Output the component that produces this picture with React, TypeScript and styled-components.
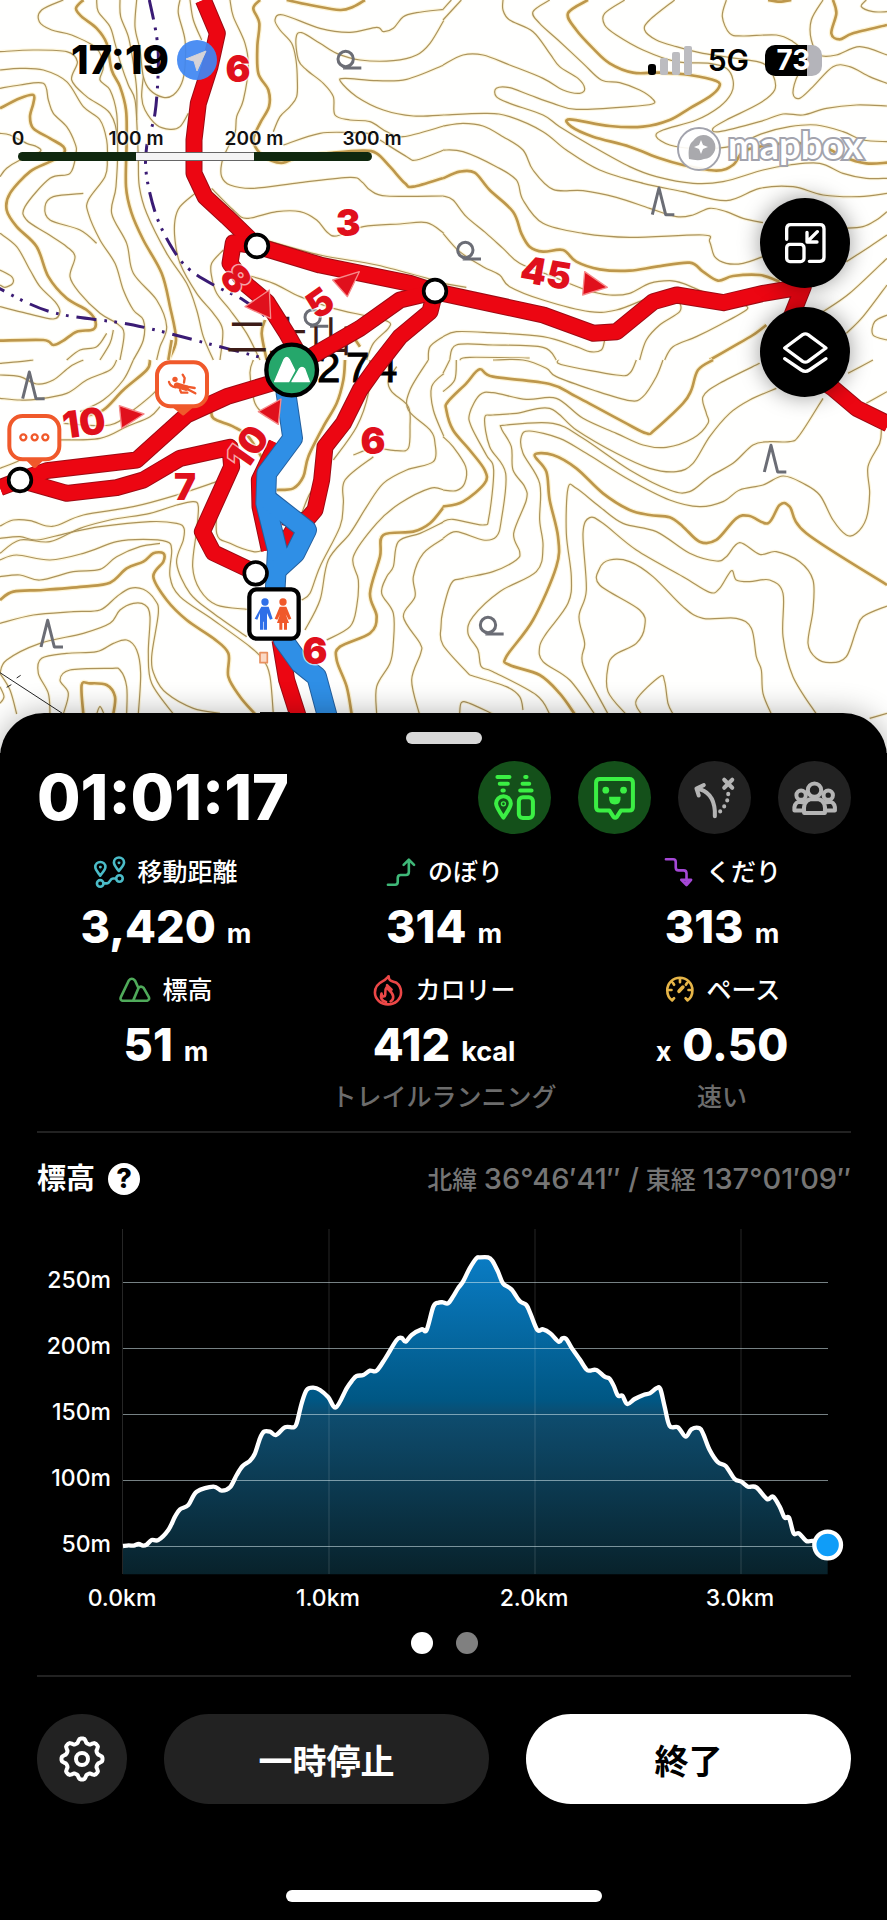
import React from "react";
import styled, { createGlobalStyle } from "styled-components";

const GlobalStyle = createGlobalStyle`
  *, *::before, *::after { box-sizing: border-box; }
  body { margin: 0; background: #000; }
  body, button { font-family: Inter, "Noto Sans CJK JP", sans-serif; }
  button { border: 0; padding: 0; cursor: pointer; }
`;

/* ---------- geometry helpers ---------- */

const parse = (s: string) => s.trim().split(/\s+/).map((p) => p.split(",").map(Number));

/** Smooth curve passing through every point. */
const curve = (s: string, tension = 6) => {
  const p = parse(s);
  let d = `M${p[0][0]} ${p[0][1]}`;
  for (let i = 0; i < p.length - 1; i++) {
    const a = p[i - 1] || p[i];
    const b = p[i];
    const c = p[i + 1];
    const e = p[i + 2] || c;
    d += `C${(b[0] + (c[0] - a[0]) / tension).toFixed(1)} ${(b[1] + (c[1] - a[1]) / tension).toFixed(1)} ${(c[0] - (e[0] - b[0]) / tension).toFixed(1)} ${(c[1] - (e[1] - b[1]) / tension).toFixed(1)} ${c[0]} ${c[1]}`;
  }
  return d;
};

/* ---------- map data: four tiles, three units to the pixel ---------- */

type Tile = { x: number; y: number; minor: string[]; major: string[] };

const tiles: Tile[] = [
  {
    x: 0,
    y: 0,
    minor: [
      "190,0 125,30 118,65 155,90 215,105 290,145 310,200 300,240 330,270 350,340 352,430",
      "290,0 295,35 330,80 345,130 362,190 385,255 405,300 412,400 415,480 418,560 440,640 500,760 560,850 590,930 610,1010 640,1080",
      "360,0 362,50 385,110 400,190 410,270 410,360",
      "410,0 405,80 420,150 430,230 450,270 490,292 520,285 545,250 555,200 555,120 535,40 540,0",
      "570,0 580,60 605,120",
      "430,230 425,290 435,330 470,375 510,388 540,380 565,340",
      "0,210 60,205 130,210 200,245 250,320 300,360 320,420 322,480 315,530 265,600 265,640 300,720 345,790 370,870 400,930 430,960 430,1020 400,1080",
      "0,265 60,255 130,250 145,300 160,340 200,380 225,430 228,460 210,520 150,535 75,620 80,660 140,700 200,740 225,770 210,830 240,880 300,940 350,970 372,1000 360,1080",
      "0,155 100,150 200,155 232,185 215,240 260,290 330,340 352,420 348,560 335,640 380,730 400,820 470,900 500,980 480,1040 470,1080",
      "250,580 160,590 135,620 150,660 240,690 290,730",
      "0,400 30,405 80,430 110,440 120,455 60,480 20,505 0,530",
      "585,580 540,620 525,660 525,720 540,790 590,880 640,940 668,990 660,1080",
      "0,810 35,830 38,850 15,862 0,855",
      "0,920 80,940 160,957 180,935 165,905 120,860 90,810 50,740 0,700",
      "300,1080 330,1030 340,990",
      "690,0 700,50 735,130 745,200 730,300 710,350 705,400 680,450 665,490 665,530 690,555 760,565 900,548 1050,532 1085,545 1110,570 1160,588 1332,588",
      "1332,28 1250,38 1210,50 1180,85 1150,95 1130,82 1050,97 960,85 850,45 825,60 840,90 875,130 888,180 892,240 890,290 870,320 840,350 820,395",
      "1332,60 1290,130 1250,165 1180,182 1080,180 1010,160 960,130 905,98 888,115 895,180 920,210 970,250 1000,290 1005,345 1050,360 1110,365 1160,395 1210,410 1332,378",
      "1332,345 1240,348 1150,330 1070,290 1022,245 1035,235 1130,242 1220,238 1332,195",
      "850,435 960,400 1060,398 1120,402",
      "1140,420 1220,470 1250,480 1332,450",
      "635,565 700,630 740,655 830,635 900,635 950,660 980,695 1010,708 1090,680 1200,672 1280,668 1332,700",
      "780,715 960,765 1130,795 1300,840",
      "670,750 635,790 635,830 650,880 690,930 740,1000 780,1080",
      "740,825 820,850 900,890 1000,925 1100,948 1165,965 1165,985 1120,1030 1100,1080",
      "1329,1010 1290,1040 1285,1080",
      "200,1080 240,1050 290,1040 320,1000",
    ],
    major: [
      "0,325 60,295 100,285 100,310 90,350 100,385 150,415 190,440 190,462 150,485 90,515 30,580 20,630 50,680 110,740 145,830 200,895 260,930 285,960 280,988 230,995 190,1022 160,1035 130,1020 0,1022",
      "250,0 228,25 245,50 290,85 320,130 335,210 360,260 378,330 380,420 378,560 395,640 430,720 485,820 510,920 528,1020 505,1080",
      "780,0 760,25 778,70 772,140 775,220 805,270 807,320 780,370 760,420 780,460 815,482 850,488 900,470 1000,458 1090,452 1130,460 1170,500 1215,550 1240,560 1332,533",
      "860,0 930,15 1020,30 1060,20 1095,0",
      "795,960 785,1000 800,1080",
      "1060,1010 1080,1040",
    ],
  },
  {
    x: 1329,
    y: 0,
    minor: [
      "0,60 55,0",
      "0,28 25,0",
      "0,195 60,165 120,165 200,195 300,235 360,270 410,280 425,265 405,235 350,200 320,160 270,95 200,60 180,30 180,0",
      "320,0 270,35 290,70 345,120 420,190 475,240 530,248 590,270 630,298 628,312 560,320 400,328 330,310 260,285 200,263 160,265 160,290 200,310 300,345 350,380 450,440 560,500 640,530 750,550 840,545 960,510 1040,495 1130,490 1200,520 1270,535 1332,535",
      "545,0 485,40 485,75 520,105 600,150 700,185 800,190 850,205 870,240 865,280 830,320 760,360 660,390 640,410 680,435 750,445 860,440 960,400 1040,380 1120,375 1200,395 1260,420 1332,425",
      "695,0 620,60 605,90 640,120 700,140 780,160 880,175 960,190 990,225 995,270 950,310 850,360 810,385 830,395 950,365 1020,342 1080,345 1150,325 1240,315 1332,318",
      "850,0 838,50 860,100 900,108 1000,105 1050,125 1090,160 1105,185 1065,225 1050,280 1070,295 1110,260 1170,200 1220,200 1280,230 1332,250",
      "1140,0 1105,60 1105,120 1130,165 1180,165 1250,140 1332,165",
      "1270,0 1255,20 1290,35 1332,35",
      "0,345 130,340 200,350 300,395 370,450 470,510 600,550 720,575 850,602 950,565 1050,560 1140,585 1250,590 1332,580",
      "0,378 60,370 120,378 180,410 240,450 270,510 330,568 420,572 520,592 620,625 700,650 750,645 800,625 850,635 900,655 960,668",
      "0,450 60,455 160,500 220,540 240,600 300,670 420,700 560,712 780,705 800,725 815,770 850,790 900,790 960,770",
      "0,588 30,600 70,650 130,700 180,745 230,790 330,830 430,870 500,885 560,880 620,850 680,842 720,850 790,880",
      "0,700 50,755 120,800 170,825 200,860 300,900 440,935 520,930 600,900",
      "1200,685 1260,680 1300,660 1332,635",
      "1210,785 1280,740 1332,705",
      "1140,935 1220,880 1332,775",
      "1210,1000 1260,950 1332,855",
      "1332,945 1295,965 1290,1005 1332,1020",
      "0,1010 40,995 140,998 300,1010 400,1040 440,1055 475,1050 485,1020",
      "20,1080 40,1035 150,1035 300,1042 340,1080",
      "50,1080 80,1072 260,1074",
      "590,1080 610,1020 650,975 710,935 710,905",
      "665,1080 690,1040 760,1010 830,975 910,930 905,915",
      "0,850 70,862",
    ],
    major: [
      "435,0 375,40 400,90 450,145 500,190 570,218 650,218 740,225 820,243 828,262 800,290 740,325 680,360 600,380 500,378 380,358 385,380 450,410 560,440 650,475 720,495 820,512 870,495 900,455 950,440 1030,430 1130,435 1200,470 1270,490 1332,488",
      "1170,0 1180,40 1165,100 1190,118 1230,100 1332,75",
      "975,0 1010,5 1045,0",
      "0,535 50,515 95,518 140,570 210,635 235,700 260,740 300,755 360,750 400,785 470,808 560,812 640,800 740,788 780,815 825,842 870,828 950,825 1010,845",
      "800,1080 870,1040 930,1005 970,975",
    ],
  },
  {
    x: 0,
    y: 1080,
    minor: [
      "0,45 60,50 110,72 160,60 210,20 250,0",
      "0,10 60,5 100,0",
      "0,115 60,120 110,118 200,100 260,60 330,30 350,0",
      "240,155 310,120 370,60 400,0",
      "190,190 330,195 400,150 450,110 470,90",
      "170,240 300,235 380,200 450,170 480,140",
      "0,325 60,300 110,260",
      "0,498 40,480 90,482 140,498 175,495 250,465 400,440 530,405 650,365",
      "0,535 60,530 110,540 200,520 300,500 450,485 530,490 552,505 550,540 530,610 570,700 640,760 740,830",
      "0,580 60,540 150,545 240,505 330,480 450,460 530,435 580,425 595,440 590,510 578,620 600,690 650,735 740,748",
      "0,600 50,585 150,600 250,580 350,545 430,538 500,545 515,570 510,650 540,710 640,780 750,860 790,900 810,950 820,1062",
      "0,650 60,645 120,660 220,635 300,628 350,590 420,560 480,550",
      "0,790 100,765 220,755 300,750 350,710 390,685 430,688 465,720 475,760 455,890 465,950 500,1000 580,1045 660,1060",
      "0,940 20,900 120,850 250,820 330,790 360,750 400,730 435,735 450,770 445,880 455,970 520,1062",
      "150,1062 145,1000 115,940 125,895 200,880 290,875 340,850 380,840 410,870 422,940 415,1062",
      "190,1062 205,1000 180,960 210,930 330,925 360,930 380,980 380,1062",
      "290,1062 300,1040 312,1062",
      "0,980 12,1010 0,1030",
      "50,1062 30,990 0,940",
      "655,400 650,520 690,550 760,575 790,570",
      "760,0 750,40 765,130 800,170",
      "1110,0 1105,100 1070,200 1000,300",
      "1190,20 1165,60 1175,95 1225,140 1230,200 1225,265 1190,272 1120,265 1060,285",
      "1285,0 1230,90 1225,150 1290,210 1305,250 1300,305 1220,330 1150,370 1100,440 1050,520 985,600 960,720 915,810",
      "1332,40 1295,80 1300,150 1332,230",
      "1120,290 1035,360 1030,430 1020,500 960,620 930,700 905,720",
      "1332,390 1290,385 1200,430 1130,490 1060,590 1075,660 1070,740 1050,800 980,840",
      "1332,485 1260,520 1195,545 1180,620 1160,650 1145,700 1180,760 1180,850 1170,910 1130,980 1130,1062",
      "1332,535 1270,580 1240,650 1245,710 1210,770 1260,850 1262,880 1235,960 1258,1062",
      "905,460 930,400 960,370",
    ],
    major: [
      "250,170 310,150 370,90 440,30 450,0",
      "505,0 515,-60",
      "635,145 640,175 700,200 745,230 790,300",
      "830,390 880,385 910,350 925,290 970,200 1010,130 1030,60 1035,0",
      "0,720 40,695 130,690 250,680 330,668 380,625 430,605 460,580 490,580 490,605 460,650 500,720 560,780 640,835 685,880 685,950 720,1010 765,1062",
      "250,1062 245,975 270,970 320,975 345,1010 340,1062",
      "1332,440 1290,490 1240,515 1150,525 1140,590 1110,700 1130,770 1110,820 1020,860 1010,900 1040,980 1055,1062",
    ],
  },
  {
    x: 1329,
    y: 1080,
    minor: [
      "0,230 30,260 68,320 65,370 40,392 0,390",
      "0,95 35,60 40,0",
      "0,40 20,0",
      "150,0 240,0 310,25 340,50 450,90 560,122 600,110 640,50 660,0",
      "345,0 360,15 520,45 560,40 580,0",
      "0,485 30,478 120,495 138,470 152,330 130,285 85,200 80,160 110,105 150,98 250,118 340,115 420,175 520,220 600,255 670,262 750,235 795,190 790,160 780,110 830,70 950,10",
      "0,535 40,515 120,540 160,530 175,480 188,340 140,260 125,175 150,165 220,160 320,145 400,210 520,280 620,325 700,335 750,310 800,230 860,160 920,120 1000,85",
      "80,945 0,855 -6,800 0,750 25,670 60,655 150,635 220,600 230,575 212,520 250,420 245,380 210,330 205,260 175,205 190,195 330,190 420,235 560,330 680,390 740,395 800,350 870,310 930,255 980,245 1040,245 1070,225 1140,115",
      "320,1062 280,1005 150,935 115,920 105,870 75,820 90,770 170,695 280,635 300,560 290,480 290,370 240,280 235,230 260,213 350,235 430,280 560,360 680,420 770,440 840,425 890,390 960,375 1020,348 1080,370 1130,405 1170,480 1210,525 1240,520 1270,475 1280,400 1275,320 1310,250 1315,210",
      "455,1062 380,960 300,905 290,860 310,820 375,730 385,650 370,520 375,385 400,385 470,440 540,490 640,515 740,580 820,603 850,590 890,548 950,583 1000,575 1070,605 1110,660 1110,750 1095,850 1120,895 1165,908 1210,890 1240,810 1260,770 1332,738",
      "495,1062 420,915 425,850 408,770 430,690 420,520 440,473 480,490 580,570 720,650 800,697 830,685 865,632 880,660 920,665 980,660 1020,700 1020,830 1050,950 1120,1062",
      "548,1062 495,995 495,920 515,885 580,850 605,800 590,750 470,675 470,625 500,600 560,605 630,650 720,740 780,775 880,775 925,805 940,890 955,930 960,1000 985,1062",
      "595,1062 580,1020 650,950 665,965 675,1030 690,1062",
      "50,1062 55,1028 80,1030 150,1062",
      "240,1050 230,1010 190,980 80,945",
      "1280,1075 1332,1060",
      "1270,130 1332,95",
      "1215,40 1290,0",
    ],
    major: [
      "0,440 60,425 125,370 125,330 80,270 30,210 10,150 15,125 70,70 110,28 150,50 320,72 400,110 540,185 610,220 635,210 720,130 745,90 765,30 810,0",
      "395,1062 350,1000 290,945 200,915 190,890 270,780 340,620 345,530 320,420 310,335 275,285 330,285 400,325 480,400 560,450 620,465 680,472 720,500 770,545 820,540 880,475 920,468 975,490 1010,435 1040,440 1090,520 1332,675",
    ],
  },
];

const trails = [
  "610,0 652,100 630,200 595,310 582,420 582,520 615,590 680,650 771,738 960,795 1230,850 1305,875 1630,945 1780,1000 1850,995 1960,905 2030,885 2170,908 2290,880 2410,860 2370,960 2420,1110 2499,1165 2570,1225 2665,1272",
  "771,738 700,728 690,790 740,855 800,905 860,1000 900,1070",
  "1305,875 1200,900 1080,985 950,1060 880,1100",
  "1305,875 1290,935 1200,1010 1130,1100 1080,1170 1030,1270 975,1340 965,1440 945,1530 915,1565 850,1550",
  "0,1463 60,1440 140,1412 410,1380 560,1245 680,1190 880,1130",
  "60,1440 200,1480 350,1463 430,1440 540,1375 690,1342 695,1400 650,1500 607,1595 640,1658 767,1718",
  "830,1330 778,1440 780,1520 808,1650",
  "880,1590 830,1670",
  "840,1920 860,2040 895,2150",
];

const walked = [
  "880,1110 858,1180 878,1315 800,1420 797,1510 832,1650 825,1780 850,1920 900,1990 950,2030 985,2160",
  "805,1500 920,1590 885,1660 830,1710",
];

const junctions = [
  [771, 738],
  [1305, 873],
  [60, 1440],
  [767, 1720],
];

const times: [string, number, number, number][] = [
  ["6", 238, 69, 0],
  ["3", 348, 223, 0],
  ["8", 236, 279, 52],
  ["5", 320, 303, -35],
  ["45", 546, 273, 10],
  ["10", 84, 423, -8],
  ["10", 248, 447, -55],
  ["7", 185, 487, 0],
  ["6", 373, 441, 0],
  ["6", 315, 651, 0],
];

const arrows = [
  "735,920 808,870 812,955",
  "998,840 1078,815 1042,890",
  "1754,815 1822,862 1748,885",
  "358,1217 432,1242 365,1285",
  "775,1235 843,1197 835,1273",
];

const broadleaf = [
  [1037, 177],
  [1396, 750],
  [1464, 1875],
  [938, 952],
];
const conifer = [
  [1979, 560],
  [90, 1112],
  [145, 1857],
  [2315, 1332],
];

/* ---------- map ---------- */

const Canvas = styled.svg`
  position: absolute;
  inset: 0;
  width: 100%;
  height: 100%;
  background: #fffffe;
`;

const TimeLabel = styled.text`
  font: 900 37px Inter, sans-serif;
  fill: #e0101c;
  stroke: rgba(255, 255, 255, 0.65);
  stroke-width: 3px;
  paint-order: stroke;
  text-anchor: middle;
`;

const PeakName = styled.text`
  font: 400 42px "Noto Sans CJK JP", sans-serif;
  fill: #3d1c17;
`;

const PeakHeight = styled.text`
  font: 400 42px "Liberation Sans", sans-serif;
  fill: #000;
  stroke: #000;
  stroke-width: 1px;
`;

const TrailMap = () => (
  <Canvas viewBox="0 0 887 754" preserveAspectRatio="xMidYMin slice" role="img" aria-label="二上山の登山地図">
    <g transform="scale(0.33333)" fill="none" strokeLinejoin="round">
      {tiles.map((t, i) => (
        <g key={i} transform={`translate(${t.x} ${t.y})`}>
          {t.minor.map((p, j) => (
            <path key={`h${j}`} d={curve(p)} stroke="#fdf6dc" strokeWidth="10" />
          ))}
          {t.major.map((p, j) => (
            <path key={`g${j}`} d={curve(p)} stroke="#fdf3d2" strokeWidth="15" />
          ))}
          {t.minor.map((p, j) => (
            <path key={`m${j}`} d={curve(p)} stroke="#ab935c" strokeWidth="3.6" />
          ))}
          {t.major.map((p, j) => (
            <path key={`M${j}`} d={curve(p)} stroke="#bd974c" strokeWidth="8" />
          ))}
        </g>
      ))}
      <g stroke="#3a1b74" strokeWidth="9" strokeDasharray="60 24 8 22 8 24">
        <path d={curve("448,0 470,110 475,200 465,340 440,440 440,530 470,650 520,750 570,810 650,860 730,900 820,970 880,1040")} />
        <path d={curve("-40,845 150,935 400,975 640,1035 830,1085")} />
      </g>
      <path d="M0 2018 190 2142M20 2062l14-8M50 2034l12-8" stroke="#222" strokeWidth="3" />
      <g stroke="#6b6d75" strokeWidth="9">
        {broadleaf.map(([x, y]) => (
          <path key={x} d={`M${x - 23} ${y}a23 23 0 1 0 46 0a23 23 0 1 0-46 0M${x - 8} ${y + 27}H${x + 47}`} />
        ))}
        {conifer.map(([x, y]) => (
          <path key={x} d={`M${x - 22} ${y + 84}L${x - 2} ${y + 4}L${x + 18} ${y + 84}H${x + 44}`} />
        ))}
      </g>
    </g>
    <PeakName x="226" y="352">二上山</PeakName>
    <PeakHeight x="317" y="382">2</PeakHeight>
    <PeakHeight x="346" y="382">7</PeakHeight>
    <PeakHeight x="374" y="382">4</PeakHeight>
    <g transform="scale(0.33333)" fill="none" strokeLinejoin="round">
      {trails.map((p) => (
        <polyline key={p} points={p} stroke="#9c0b14" strokeWidth="51" />
      ))}
      {trails.map((p) => (
        <polyline key={p} points={p} stroke="#ec0612" strokeWidth="45" />
      ))}
      {walked.map((p) => (
        <polyline key={p} points={p} stroke="#24609f" strokeWidth="62" />
      ))}
      {walked.map((p) => (
        <polyline key={p} points={p} stroke="#2f8fe6" strokeWidth="56" />
      ))}
      {junctions.map(([x, y]) => (
        <circle key={x} cx={x} cy={y} r="34" fill="#fff" stroke="#000" strokeWidth="11" />
      ))}
      {arrows.map((p) => (
        <polygon key={p} points={p} fill="#e0101c" stroke="#f58a8a" strokeWidth="4" />
      ))}
      <rect x="780" y="1958" width="22" height="30" fill="#fbd9c4" stroke="#e8905f" strokeWidth="5" />
      <path d="M780 2136h90v20h-90z" fill="#111" />
      {/* hazard and note pins */}
      <g fill="#fff" stroke="#f0592b" strokeWidth="12">
        <path d="M520 1216h58l-28 24zM78 1372h52l-26 26z" fill="#f0592b" />
        <rect x="471" y="1087" width="150" height="132" rx="40" />
        <rect x="28" y="1248" width="150" height="130" rx="40" />
      </g>
      <g stroke="#f0592b" strokeWidth="7">
        <circle cx="70" cy="1312" r="9" />
        <circle cx="104" cy="1312" r="9" />
        <circle cx="136" cy="1312" r="9" />
        <circle cx="525" cy="1138" r="8" fill="#f0592b" stroke="none" />
        <path d="M507 1146q4 14 20 16M552 1148l2-14-6-10M560 1160l24 4M560 1166l26 14M540 1170l4 8 18 0" strokeLinecap="round" />
        <path d="M530 1156l28 8" strokeWidth="17" strokeLinecap="round" />
      </g>
      {/* summit */}
      <circle cx="875" cy="1110" r="76" fill="#25a76b" stroke="#000" strokeWidth="13" />
      <path d="M824 1145l28-66q8-14 16 0l16 32-18 34zM876 1145l22-38q8-10 16 0l14 38z" fill="#fff" stroke="#fff" strokeWidth="4" />
      {/* toilet */}
      <rect x="748" y="1768" width="148" height="148" rx="22" fill="#fff" stroke="#000" strokeWidth="13" />
      <g fill="#2f6fe8">
        <circle cx="795" cy="1806" r="11" />
        <path d="M784 1820h22l12 36-8 3-9-20v50h-10v-24h-2v24h-9v-50l-8 20-8-3z" />
      </g>
      <g fill="#f0592b">
        <circle cx="849" cy="1806" r="11" />
        <path d="M839 1820h20l15 36-8 3-9-16 10 26h-6v20h-9v-20h-5v20h-9v-20h-7l9-26-8 16-8-3z" />
      </g>
    </g>
    {times.map(([label, x, y, angle], i) => (
      <TimeLabel key={i} x="0" y="13" transform={`translate(${x} ${y}) rotate(${angle})`}>
        {label}
      </TimeLabel>
    ))}
  </Canvas>
);

const Screen = styled.main`
  display: flex;
  flex-direction: column;
  min-height: 100vh;
  background: #000;
`;

const MapArea = styled.section`
  position: relative;
  flex: 1 0 auto;
  min-height: 480px;
  overflow: hidden;
  padding-bottom: 60px;
`;

const Overlay = styled.div`
  position: relative;
  display: flex;
  flex-direction: column;
`;

const StatusBar = styled.div`
  display: flex;
  align-items: center;
  height: 44px;
  margin-top: 38px;
  padding: 0 65px 0 71px;
  color: #000;
`;

const Clock = styled.span`
  font-size: 40px;
  font-weight: 800;
  line-height: 44px;
`;

const LocationIcon = styled.svg`
  width: 40px;
  height: 40px;
  margin-left: 8px;
`;

const StatusRight = styled.div`
  display: flex;
  align-items: center;
  gap: 16px;
  margin-left: auto;
  font-size: 30px;
  font-weight: 600;
`;

const Battery = styled.span`
  display: flex;
  align-items: center;
  justify-content: center;
  width: 57px;
  height: 31px;
  border-radius: 10px;
  color: #fff;
  font-size: 28px;
  font-weight: 700;
  line-height: 31px;
  background: linear-gradient(90deg, #000 73%, #b4b4ba 73%);
`;

const MapInfo = styled.div`
  display: flex;
  justify-content: space-between;
  height: 46px;
  margin-top: 44px;
  padding-right: 19px;
`;

const Scale = styled.div`
  width: 354px;
  margin-left: 18px;
`;

const ScaleLabels = styled.div`
  display: grid;
  grid-template-columns: repeat(4, 118px);
  margin-left: -59px;
  text-align: center;
  color: #111;
  font-size: 19px;
  font-weight: 600;
  line-height: 26px;
  text-shadow: 0 0 2px #fff, 0 0 2px #fff;
`;

const ScaleBar = styled.div`
  display: grid;
  grid-template-columns: repeat(3, 1fr);
  height: 9px;
  border-radius: 5px;
  overflow: hidden;
`;

const ScalePart = styled.span<{ $light?: boolean }>`
  background: ${(p) => (p.$light ? "#f4f4f4" : "#10280f")};
  ${(p) => p.$light && "border: solid #666; border-width: 1px 0;"}
`;

const Attribution = styled.a`
  display: block;
  width: 192px;
  height: 46px;

  svg {
    display: block;
    overflow: visible;
  }
`;

const LogoText = styled.text`
  font: 700 38px Lato, sans-serif;
  fill: #fff;
  stroke: #a2a3ad;
  stroke-width: 4px;
  paint-order: stroke;
`;

const MapActions = styled.div`
  display: flex;
  flex-direction: column;
  align-self: flex-end;
  gap: 19px;
  margin: 26px 37px 0 0;
`;

const MapButton = styled.button`
  width: 90px;
  height: 90px;
  border-radius: 50%;
  background: #000;
  box-shadow: 0 0 22px rgba(0, 0, 0, 0.4);

  svg {
    display: block;
    width: 100%;
    height: 100%;
    fill: none;
    stroke: #fff;
    stroke-width: 10;
    stroke-linecap: round;
    stroke-linejoin: round;
  }
`;

/* ---------- sheet ---------- */

const Sheet = styled.section`
  position: relative;
  display: flex;
  flex-direction: column;
  margin-top: -40px;
  padding: 19px 36px 18px 37px;
  border-radius: 44px 44px 0 0;
  background: #000;
  color: #fff;
  box-shadow: 0 0 30px rgba(0, 0, 0, 0.3);
`;

const Handle = styled.span`
  align-self: center;
  width: 76px;
  height: 12px;
  border-radius: 6px;
  background: #d8d8d8;
`;

const Header = styled.header`
  display: flex;
  align-items: center;
  justify-content: space-between;
  margin-top: 17px;
`;

const Timer = styled.h1`
  margin: 0;
  font-size: 63px;
  font-weight: 800;
  line-height: 73px;
`;

const RoundActions = styled.div`
  display: flex;
  gap: 27px;
`;

const RoundButton = styled.button<{ $on?: boolean }>`
  width: 73px;
  height: 73px;
  border-radius: 50%;
  background: ${(p) => (p.$on ? "#14501a" : "#222")};
  color: ${(p) => (p.$on ? "#3bef44" : "#b5b5b5")};

  svg {
    display: block;
    width: 100%;
    height: 100%;
    fill: none;
    stroke: currentColor;
    stroke-width: 12;
    stroke-linecap: round;
    stroke-linejoin: round;
  }
`;

const Stats = styled.dl`
  display: grid;
  grid-template-columns: repeat(3, 1fr);
  gap: 20px;
  margin: 20px 0 0;
`;

const Stat = styled.div`
  display: flex;
  flex-direction: column;
  align-items: center;
`;

const StatLabel = styled.dt`
  display: flex;
  align-items: center;
  gap: 11px;
  font-size: 25px;
  font-weight: 500;
  line-height: 36px;
  white-space: nowrap;

  svg {
    width: 32px;
    height: 32px;
    fill: none;
    stroke-width: 8;
    stroke-linecap: round;
    stroke-linejoin: round;
  }
`;

const StatValue = styled.dd`
  display: flex;
  align-items: baseline;
  gap: 11px;
  height: 50px;
  margin: 12px 0 0;
  font-size: 45px;
  font-weight: 800;
  line-height: 50px;
`;

const Unit = styled.span`
  font-size: 27px;
  font-weight: 700;
`;

const StatNote = styled.dd`
  margin: 9px 0 0;
  color: #6c6c6c;
  font-size: 25px;
  font-weight: 500;
  line-height: 36px;
  white-space: nowrap;
`;

const Divider = styled.hr<{ $top: number }>`
  width: 100%;
  height: 2px;
  margin: ${(p) => p.$top}px 0 0;
  border: 0;
  background: #222;
`;

const ChartHeader = styled.div`
  display: flex;
  align-items: center;
  height: 36px;
  margin-top: 28px;
`;

const ChartTitle = styled.h2`
  margin: 0;
  font-size: 29px;
  font-weight: 700;
  line-height: 36px;
`;

const HelpButton = styled.button`
  width: 32px;
  height: 32px;
  margin-left: 13px;
  border-radius: 50%;
  background: #fff;
  color: #000;
  font-size: 27px;
  font-weight: 800;
  line-height: 32px;
`;

const Position = styled.span`
  margin-left: auto;
  color: #757575;
  font-size: 25px;
  font-weight: 500;
  line-height: 36px;
`;

const Degrees = styled.span`
  font-size: 29px;
`;

const Chart = styled.svg`
  display: block;
  width: 100%;
  margin-top: 23px;
  overflow: visible;
`;

const AxisLabel = styled.text`
  font: 500 23px Inter, sans-serif;
  fill: #fff;
`;

const Pager = styled.div`
  display: flex;
  align-self: center;
  gap: 23px;
  margin-top: 17px;
`;

const PageDot = styled.button<{ $current?: boolean }>`
  width: 22px;
  height: 22px;
  border-radius: 50%;
  background: ${(p) => (p.$current ? "#fff" : "#808080")};
`;

const Controls = styled.div`
  display: grid;
  grid-template-columns: 90px 1fr 1fr;
  gap: 37px;
  margin-top: 37px;
`;

const ControlButton = styled.button<{ $primary?: boolean }>`
  display: flex;
  align-items: center;
  justify-content: center;
  height: 90px;
  border-radius: 45px;
  background: ${(p) => (p.$primary ? "#fff" : "#222")};
  color: ${(p) => (p.$primary ? "#000" : "#fff")};
  font-size: 34px;
  font-weight: 700;

  svg {
    width: 48px;
    height: 48px;
    fill: none;
    stroke: currentColor;
    stroke-width: 4;
    stroke-linejoin: round;
  }
`;

const HomeIndicator = styled.span`
  align-self: center;
  width: 316px;
  height: 12px;
  margin-top: 86px;
  border-radius: 6px;
  background: #fff;
`;

/* Elevation profile, three units to the pixel */
const profile =
  "258,978 275,976 290,977 305,972 318,977 329,974 344,960 364,960 394,930 414,890 429,868 454,855 479,815 529,800 554,812 579,802 599,765 617,738 639,722 654,700 669,655 681,635 699,635 717,645 744,622 769,622 779,610 794,550 809,510 829,503 849,510 874,532 897,562 929,505 945,482 959,468 979,465 999,452 1019,452 1045,415 1079,360 1094,354 1106,365 1124,345 1154,328 1169,330 1189,260 1204,248 1218,247 1233,250 1248,230 1263,205 1278,185 1298,145 1318,115 1328,112 1353,112 1366,122 1383,155 1398,190 1423,208 1448,243 1468,255 1480,280 1501,330 1518,328 1540,340 1565,365 1576,355 1588,357 1603,382 1628,418 1648,448 1658,452 1678,450 1703,470 1718,476 1730,497 1743,527 1756,527 1771,552 1793,537 1821,524 1838,520 1858,505 1870,507 1883,560 1898,618 1923,622 1946,650 1963,628 1988,625 2000,645 2018,690 2043,727 2066,738 2093,777 2113,785 2133,800 2158,802 2190,837 2208,830 2228,860 2243,893 2256,893 2270,940 2286,940 2308,963 2328,963 2372,972";

const Elevation = () => {
  const line = curve(profile);
  return (
    <Chart viewBox="0 0 814 395" role="img" aria-label="標高グラフ">
      <defs>
        <linearGradient id="slope" x1="0" y1="0" x2="0" y2="1">
          <stop offset="0" stopColor="#0a7cc4" />
          <stop offset="0.45" stopColor="#005784" />
          <stop offset="0.5" stopColor="#0e4c6e" />
          <stop offset="1" stopColor="#08222b" />
        </linearGradient>
      </defs>
      <g transform="scale(0.33333)">
        <path d={`${line}V1063H258Z`} fill="url(#slope)" />
      </g>
      <g stroke="rgba(255,255,255,.15)" strokeWidth="1">
        {[85.5, 292, 498, 704].map((x) => (
          <path key={x} d={`M${x} 9V354`} />
        ))}
      </g>
      <g stroke="rgba(215,235,240,.55)" strokeWidth="1.2">
        {[62.5, 128.5, 194.5, 260.5, 326.5].map((y) => (
          <path key={y} d={`M86 ${y}H791`} />
        ))}
      </g>
      <g transform="scale(0.33333)">
        <path d={line} fill="none" stroke="#fff" strokeWidth="13" strokeLinejoin="round" />
        <circle cx="2372" cy="975" r="40" fill="#0f9df8" stroke="#fff" strokeWidth="13" />
      </g>
      {[250, 200, 150, 100, 50].map((m, i) => (
        <AxisLabel key={m} x="74" y={68 + i * 66} textAnchor="end">
          {m}m
        </AxisLabel>
      ))}
      {["0.0km", "1.0km", "2.0km", "3.0km"].map((km, i) => (
        <AxisLabel key={km} x={85 + i * 206} y="386" textAnchor="middle">
          {km}
        </AxisLabel>
      ))}
    </Chart>
  );
};

/* ---------- icons ---------- */

const icons = {
  distance: (
    <svg viewBox="285 432 98 98" stroke="#4bbcc8" aria-hidden="true">
      <path d="M304 492c-9-12-15-18-15-26a15 15 0 0 1 31 0c0 8-7 14-16 26zM361 478c-9-12-15-18-15-26a15 15 0 0 1 31 0c0 8-7 14-16 26z" />
      <path d="M304 466h1M361 453h1" />
      <circle cx="304" cy="516" r="10" />
      <circle cx="363" cy="501" r="10" />
      <path d="M315 516h10c10 0 8-15 18-15h8" />
    </svg>
  ),
  up: (
    <svg viewBox="1153 433 98 98" stroke="#3fb878" aria-hidden="true">
      <path d="M1162 521h22q8 0 8-8v-13q0-9 9-9h16q9 0 9-9v-36M1210 460l16-16 16 16" />
    </svg>
  ),
  down: (
    <svg viewBox="658 433 98 98" stroke="#a548d6" aria-hidden="true">
      <path d="M667 443h22q8 0 8 8v17q0 9 9 9h15q9 0 9 9v33M714 506l16 16 14-16z" />
    </svg>
  ),
  peak: (
    <svg viewBox="360 790 98 98" stroke="#4faa5a" aria-hidden="true">
      <path d="M370 872q-8-3-4-12l24-50q9-11 19 0l9 20M370 872h76q9-3 5-12l-16-28q-8-7-15 0l-16 38" />
    </svg>
  ),
  flame: (
    <svg viewBox="1117 790 98 98" stroke="#ec4747" aria-hidden="true">
      <path d="M1168 797c0 16 10 14 24 20 11 8 14 18 14 30a40 36 0 0 1-80 0c0-22 14-30 24-35 9-5 13-10 18-15z" />
      <path d="M1160 876c-14-4-18-14-14-26 2 8 6 10 10 8 6-6-4-16 6-28 2 10 20 14 20 30 0 8-4 12-8 14M1163 824l14 14" />
    </svg>
  ),
  pace: (
    <svg viewBox="657 785 98 98" stroke="#e6b548" aria-hidden="true">
      <path d="M682 866q-15-10-15-31a38 38 0 0 1 77 0q0 21-15 31l-6-7M682 866l6-7M706 802v8M684 812l4 6M728 812l-4 6M674 834h6M732 834h6" />
      <path d="M703 838l12-13" strokeWidth="11" />
    </svg>
  ),
};

type StatItem = { icon: React.ReactNode; label: string; value: string; unit: string; prefix?: boolean; note?: string };

const stats: StatItem[] = [
  { icon: icons.distance, label: "移動距離", value: "3,420", unit: "m" },
  { icon: icons.up, label: "のぼり", value: "314", unit: "m" },
  { icon: icons.down, label: "くだり", value: "313", unit: "m" },
  { icon: icons.peak, label: "標高", value: "51", unit: "m" },
  { icon: icons.flame, label: "カロリー", value: "412", unit: "kcal", note: "トレイルランニング" },
  { icon: icons.pace, label: "ペース", value: "0.50", unit: "x", prefix: true, note: "速い" },
];

const gear = (() => {
  const pts: string[] = [];
  for (let i = 0; i < 96; i++) {
    const a = (i / 96) * Math.PI * 2;
    const r = 18.4 + 2.2 * Math.tanh(2 * Math.cos(8 * a));
    pts.push(`${(24 + r * Math.sin(a)).toFixed(1)},${(24 - r * Math.cos(a)).toFixed(1)}`);
  }
  return pts.join(" ");
})();

export default function App() {
  return (
    <>
      <GlobalStyle />
      <Screen>
        <MapArea>
          <TrailMap />
          <Overlay>
            <StatusBar>
              <Clock>17:19</Clock>
              <LocationIcon viewBox="0 0 40 40" aria-hidden="true">
                <circle cx="20" cy="20" r="20" fill="#3f86f2" fillOpacity=".93" />
                <path d="M29 11 20 31l-3-10-8-2z" fill="#d5d3d8" stroke="#d5d3d8" strokeLinejoin="round" />
              </LocationIcon>
              <StatusRight>
                <svg width="44" height="30" viewBox="0 0 44 30" aria-hidden="true">
                  <rect x="0" y="19" width="8" height="11" rx="3" fill="#000" />
                  <g fill="#bcbcc0">
                    <rect x="12" y="13" width="8" height="17" rx="2" />
                    <rect x="24" y="7" width="8" height="23" rx="2" />
                    <rect x="36" y="1" width="8" height="29" rx="2" />
                  </g>
                </svg>
                <span>5G</span>
                <Battery>73</Battery>
              </StatusRight>
            </StatusBar>
            <MapInfo>
              <Scale>
                <ScaleLabels>
                  <span>0</span>
                  <span>100 m</span>
                  <span>200 m</span>
                  <span>300 m</span>
                </ScaleLabels>
                <ScaleBar>
                  <ScalePart />
                  <ScalePart $light />
                  <ScalePart />
                </ScaleBar>
              </Scale>
              <Attribution href="#mapbox" aria-label="mapbox">
                <svg width="192" height="46" viewBox="0 0 192 46">
                  <circle cx="23" cy="23" r="21" fill="#fff" fillOpacity=".9" stroke="#a2a3ad" strokeWidth="2" />
                  <path d="M13 33c-1-9 0-15 4-18a12 12 0 1 1 11 18c-5 2-10 1-15 0z" fill="#a9a9ad" />
                  <path d="M25 14l2 5 5 2-5 2-2 5-2-5-5-2 5-2z" fill="#fff" />
                  <LogoText x="52" y="33">
                    mapbox
                  </LogoText>
                </svg>
              </Attribution>
            </MapInfo>
            <MapActions>
              <MapButton aria-label="地図を縮小">
                <svg viewBox="60 54 270 270">
                  <path d="M140 178v-32q0-12 12-12h88q12 0 12 12v86q0 12-12 12h-32M201 157v29h30M204 183l28-28" />
                  <rect x="140" y="193" width="52" height="52" rx="10" />
                </svg>
              </MapButton>
              <MapButton aria-label="レイヤー">
                <svg viewBox="60 380 270 270">
                  <path d="M134 503l54-40q8-5 16 0l54 40-54 40q-8 5-16 0zM134 535l50 34q12 8 24 0l50-34" />
                </svg>
              </MapButton>
            </MapActions>
          </Overlay>
        </MapArea>

        <Sheet>
          <Handle />
          <Header>
            <Timer>01:01:17</Timer>
            <RoundActions>
              <RoundButton $on aria-label="位置情報の共有">
                <svg viewBox="105 156 218 218">
                  <path d="M163 204h36M170 224h24M178 244h4M246 204h4M238 224h20M231 244h34" />
                  <path d="M181 325c-14-20-22-32-22-42a22 22 0 0 1 44 0c0 10-8 22-22 42z" />
                  <circle cx="181" cy="284" r="2" />
                  <rect x="227" y="264" width="42" height="62" rx="12" />
                </svg>
              </RoundButton>
              <RoundButton $on aria-label="フィールドメモ">
                <svg viewBox="405 156 218 218">
                  <path d="M470 210h88q11 0 11 11v72q0 11-11 11h-25l-12 19q-5 4-10 0l-12-19h-29q-11 0-11-11v-72q0-11 11-11z" />
                  <g fill="currentColor" stroke="none">
                    <circle cx="488" cy="243" r="10" />
                    <circle cx="541" cy="243" r="10" />
                    <path d="M498 263h34q2 23-17 23t-17-23z" />
                  </g>
                </svg>
              </RoundButton>
              <RoundButton aria-label="ルート">
                <svg viewBox="705 156 218 218">
                  <path d="M815 321v-16q-4-58-54-67M782 228l-22 10 7 21M843 212l24 24M867 212l-24 24" />
                  <path d="M855 254v1M852 273v1M843 291v1M831 306v1" />
                </svg>
              </RoundButton>
              <RoundButton aria-label="メンバー">
                <svg viewBox="1005 156 218 218">
                  <circle cx="1114" cy="243" r="20" />
                  <circle cx="1074" cy="258" r="14" />
                  <circle cx="1155" cy="258" r="14" />
                  <path d="M1083 311q-4-36 18-41h26q22 5 18 41zM1078 304h-24q-2-21 12-26l18 2M1150 304h25q2-21-12-26l-18 2" />
                </svg>
              </RoundButton>
            </RoundActions>
          </Header>

          <Stats>
            {stats.map((s) => (
              <Stat key={s.label}>
                <StatLabel>
                  {s.icon}
                  {s.label}
                </StatLabel>
                <StatValue>
                  {s.prefix && <Unit>{s.unit}</Unit>}
                  <span>{s.value}</span>
                  {!s.prefix && <Unit>{s.unit}</Unit>}
                </StatValue>
                {s.note && <StatNote>{s.note}</StatNote>}
              </Stat>
            ))}
          </Stats>

          <Divider $top={16} />

          <ChartHeader>
            <ChartTitle>標高</ChartTitle>
            <HelpButton aria-label="標高のヘルプ">?</HelpButton>
            <Position>
              北緯 <Degrees>36°46′41″ /</Degrees> 東経 <Degrees>137°01′09″</Degrees>
            </Position>
          </ChartHeader>
          <Elevation />

          <Pager>
            <PageDot $current aria-label="1ページ目" />
            <PageDot aria-label="2ページ目" />
          </Pager>

          <Divider $top={21} />

          <Controls>
            <ControlButton aria-label="設定">
              <svg viewBox="0 0 48 48">
                <polygon points={gear} />
                <circle cx="24" cy="24" r="6" />
              </svg>
            </ControlButton>
            <ControlButton>一時停止</ControlButton>
            <ControlButton $primary>終了</ControlButton>
          </Controls>
          <HomeIndicator />
        </Sheet>
      </Screen>
    </>
  );
}
